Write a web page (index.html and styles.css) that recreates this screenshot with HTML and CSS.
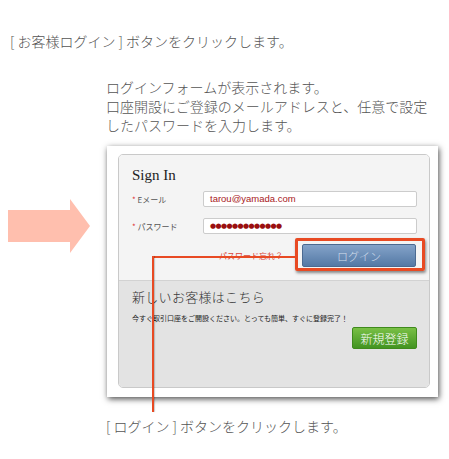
FILE: index.html
```html
<!DOCTYPE html>
<html lang="ja">
<head>
    <meta charset="UTF-8">
    <meta name="viewport" content="width=device-width, initial-scale=1.0">
    <title>ログイン手順</title>
    <link rel="stylesheet" href="styles.css">
</head>
<body>
    <p class="step">[ お客様ログイン ] ボタンをクリックします。</p>

    <p class="desc">ログインフォームが表示されます。<br>口座開設にご登録のメールアドレスと、任意で設定<br>したパスワードを入力します。</p>

    <div class="shot-row">
        <svg class="arrow" width="82" height="55" viewBox="0 0 82 55">
            <polygon points="0,11 62,11 62,0 82,27 62,54 62,43 0,43" fill="#ffbfae"/>
        </svg>

        <div class="shot">
            <div class="frame">
                <div class="panel">
                    <div class="signin">
                        <h2>Sign In</h2>
                        <div class="field">
                            <label><span class="req">*</span> Eメール</label>
                            <div class="input">tarou@yamada.com</div>
                        </div>
                        <div class="field">
                            <label><span class="req">*</span> パスワード</label>
                            <div class="input dots">●●●●●●●●●●●●●</div>
                        </div>
                        <div class="actions">
                            <a class="forgot">パスワード忘れ？</a>
                            <button class="login-btn">ログイン</button>
                        </div>
                    </div>
                    <div class="signup">
                        <h3>新しいお客様はこちら</h3>
                        <p class="note">今すぐ取引口座をご開設ください。とっても簡単、すぐに登録完了！</p>
                        <div class="signup-actions">
                            <button class="signup-btn">新規登録</button>
                        </div>
                    </div>
                </div>
            </div>

            <!-- 注釈の枠と線 -->
            <div class="callout-box"></div>
            <div class="callout-h"></div>
            <div class="callout-v"></div>
        </div>
    </div>

    <p class="caption">[ ログイン ] ボタンをクリックします。</p>
</body>
</html>
```

FILE: styles.css
```css
body {
    margin: 0;
    font-family: "Noto Sans CJK JP", "Liberation Sans", sans-serif;
    font-weight: 300;
    color: #555;
    font-size: 14px;
    background-color: #fff;
}

.step {
    margin: 0;
    padding: 32px 0 0 10px;
    line-height: 19px;
}

.desc {
    margin: 27px 0 0 106px;
    line-height: 19px;
}

.shot-row {
    display: flex;
    align-items: flex-start;
    margin-top: 11px;
}

.arrow {
    margin: 53px 0 0 8px;
}

.shot {
    position: relative;
    margin-left: 17px;
}

.frame {
    width: 312px;
    height: 234px;
    padding: 8px 8px 9px 11px;
    background-color: #fff;
    box-shadow: 1px 2px 6px rgba(0, 0, 0, 0.7);
}

.panel {
    height: 232px;
    border: 1px solid #c9c9c9;
    border-radius: 5px;
    overflow: hidden;
    display: flex;
    flex-direction: column;
}

.signin {
    background-color: #f4f4f4;
    padding: 10px 12px 0 13px;
    height: 115px;
}

.signin h2 {
    margin: 0;
    font-family: "Liberation Serif", serif;
    font-weight: normal;
    font-size: 15px;
    line-height: 20px;
    color: #222;
}

.field {
    display: flex;
    align-items: center;
    margin-top: 6px;
}

.field + .field {
    margin-top: 11px;
}

.field label {
    width: 71px;
    font-size: 8px;
    font-weight: normal;
    color: #555;
}

.req {
    color: #d33;
}

.input {
    width: 206px;
    height: 14px;
    padding-left: 6px;
    border: 1px solid #ccc;
    border-radius: 2px;
    background-color: #fff;
    font-family: "Liberation Sans", sans-serif;
    font-weight: normal;
    font-size: 9.5px;
    line-height: 14px;
    color: #a8201c;
}

.input.dots {
    font-family: "DejaVu Sans", sans-serif;
    font-size: 7px;
    letter-spacing: -0.6px;
    color: #9a0f0f;
}

.actions {
    display: flex;
    align-items: center;
    justify-content: flex-end;
    margin-top: 10px;
    padding-right: 1px;
}

.forgot {
    font-size: 8px;
    font-weight: normal;
    color: #d9453a;
    margin-right: 19px;
}

.login-btn {
    width: 114px;
    height: 23px;
    border: 1px solid #4b6a91;
    border-radius: 2px;
    background: linear-gradient(#84a3c9, #5479a5);
    color: #d3deec;
    font-family: "Noto Sans CJK JP", sans-serif;
    font-weight: 300;
    font-size: 11px;
    padding: 0;
}

.signup {
    flex: 1;
    background-color: #e3e3e3;
    border-top: 1px solid #d2d2d2;
    padding: 6px 12px 0 13px;
}

.signup h3 {
    margin: 0;
    font-weight: 300;
    font-size: 13px;
    line-height: 20px;
    letter-spacing: 0.3px;
    color: #333;
}

.note {
    margin: 6px 0 0;
    font-size: 7px;
    font-weight: normal;
    line-height: 10px;
    color: #222;
}

.signup-actions {
    display: flex;
    justify-content: flex-end;
    margin-top: 4px;
}

.signup-btn {
    width: 65px;
    height: 22px;
    border: 1px solid #3f8a1c;
    border-radius: 2px;
    background: linear-gradient(#79c045, #429421);
    color: #fff;
    font-family: "Noto Sans CJK JP", sans-serif;
    font-weight: 300;
    font-size: 12px;
    padding: 0;
}

.callout-box {
    position: absolute;
    left: 188px;
    top: 92px;
    width: 124px;
    height: 27px;
    border: 3px solid #e84a23;
    border-radius: 2px;
    box-shadow: 1px 2px 3px rgba(0, 0, 0, 0.45);
}

.callout-h {
    position: absolute;
    left: 45px;
    top: 110px;
    width: 143px;
    height: 2px;
    background-color: #e84a23;
}

.callout-v {
    position: absolute;
    left: 45px;
    top: 110px;
    width: 2px;
    height: 156px;
    background-color: #e84a23;
    box-shadow: 1px 0 1px rgba(0, 0, 0, 0.2);
}

.caption {
    margin: 20px 0 0 106px;
    line-height: 19px;
}
```
